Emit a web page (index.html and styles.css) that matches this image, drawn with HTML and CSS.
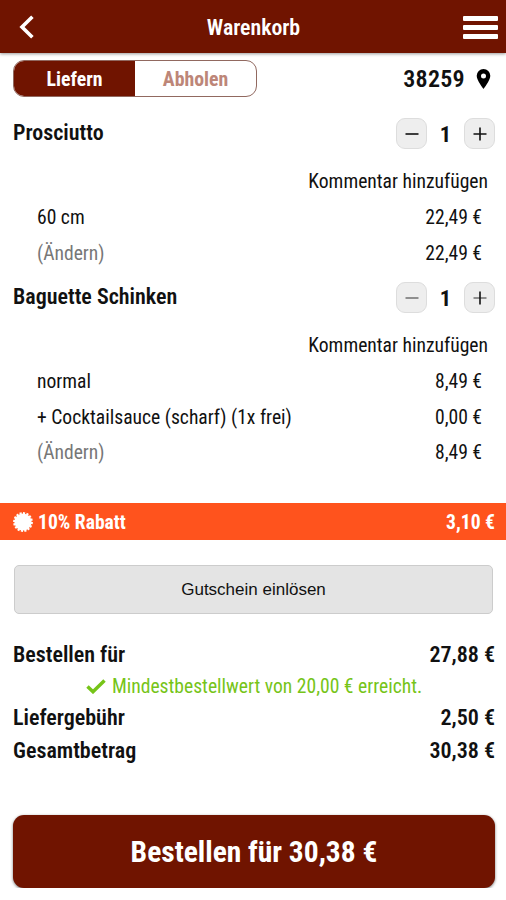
FILE: index.html
```html
<!DOCTYPE html>
<html lang="de">
<head>
<meta charset="utf-8">
<title>Warenkorb</title>
<link rel="stylesheet" href="styles.css">
</head>
<body>
<header class="topbar">
  <svg class="back" viewBox="0 0 16 24"><path d="M13.4 1.8 3 12l10.4 10.2"/></svg>
  <h1><span class="t title">Warenkorb</span></h1>
  <div class="menu"><i></i><i></i><i></i></div>
</header>
<main>
  <div class="mode">
    <div class="toggle">
      <div class="on"><span class="t">Liefern</span></div>
      <div class="off"><span class="t">Abholen</span></div>
    </div>
    <div class="zip"><span class="t">38259</span>
      <svg viewBox="0 0 14 20"><path fill-rule="evenodd" d="M7 0a6.8 6.8 0 0 0-6.8 6.8C.2 11.5 7 20 7 20s6.8-8.500 6.800-13.200A6.800 6.800 0 0 0 7 0Zm0 4.400a2.500 2.500 0 1 1 0 5 2.500 2.500 0 0 1 0-5Z"/></svg>
    </div>
  </div>
  <section class="item">
    <div class="head"><span class="t name">Prosciutto</span>
      <div class="qty"><button><svg viewBox="0 0 14 14"><path d="M.5 7h13"/></svg></button><b class="t">1</b><button><svg viewBox="0 0 14 14"><path d="M.5 7h13M7 .5v13"/></svg></button></div>
    </div>
    <div class="comment"><span class="t">Kommentar hinzufügen</span></div>
    <div class="line"><span class="t">60 cm</span><span class="t">22,49 €</span></div>
    <div class="line"><span class="t edit">(Ändern)</span><span class="t">22,49 €</span></div>
  </section>
  <section class="item">
    <div class="head"><span class="t name">Baguette Schinken</span>
      <div class="qty"><button class="dim"><svg viewBox="0 0 14 14"><path d="M.5 7h13"/></svg></button><b class="t">1</b><button><svg viewBox="0 0 14 14"><path class="faint" d="M.5 7h13"/><path d="M7 .5v13"/></svg></button></div>
    </div>
    <div class="comment"><span class="t">Kommentar hinzufügen</span></div>
    <div class="line"><span class="t">normal</span><span class="t">8,49 €</span></div>
    <div class="line"><span class="t">+ Cocktailsauce (scharf) (1x frei)</span><span class="t">0,00 €</span></div>
    <div class="line"><span class="t edit">(Ändern)</span><span class="t">8,49 €</span></div>
  </section>
  <div class="discount">
    <svg viewBox="0 0 20 20"><circle cx="10" cy="10" r="8.600"/><circle class="teeth" cx="10" cy="10" r="8.900" pathLength="64"/></svg>
    <span class="t">10% Rabatt</span><span class="t amount">3,10 €</span>
  </div>
  <button class="voucher">Gutschein einlösen</button>
  <section class="totals">
    <div class="sum"><span class="t">Bestellen für</span><span class="t">27,88 €</span></div>
    <div class="minimum"><svg viewBox="0 0 20 15"><path d="m1.500 7.500 5.500 5.200L18.500 1.500"/></svg><span class="t">Mindestbestellwert von 20,00 € erreicht.</span></div>
    <div class="sum"><span class="t">Liefergebühr</span><span class="t">2,50 €</span></div>
    <div class="sum"><span class="t">Gesamtbetrag</span><span class="t">30,38 €</span></div>
  </section>
  <button class="order"><span class="t">Bestellen für 30,38 €</span></button>
</main>
</body>
</html>
```
FILE: styles.css
```css
* { box-sizing: border-box; }
body { margin: 0; background: #fff; color: #111; font-family: "Roboto Condensed", Roboto, "Liberation Sans", sans-serif; font-stretch: 75%; font-size: 19.600px; line-height: 24px; }
button { font: inherit; color: inherit; padding: 0; }
.t { white-space: nowrap; }
.topbar { height: 53px; background: #701400; color: #fff; display: grid; grid-template-columns: 60px 1fr 60px; align-items: center; box-shadow: 0 1px 3px #4448; }
.topbar h1 { margin: 0; padding: 2px 0 0 1px; text-align: center; font-size: 21.800px; font-weight: 600; }
.back { width: 16px; height: 24px; margin: 1px 0 0 19px; fill: none; stroke: #fff; stroke-width: 3.600px; }
.menu { display: grid; gap: 4px; width: 35px; margin-left: 17px; padding-top: 2px; }
.menu i { height: 5px; background: #fff; border-radius: 1px; }
.mode { display: flex; justify-content: space-between; padding: 7px 15px 0 13px; height: 62px; }
.toggle { width: 244px; height: 37px; border: 1px solid #916960; border-radius: 11px; display: grid; grid-template-columns: 1fr 1fr; overflow: hidden; text-align: center; line-height: 37px; font-size: 19.800px; font-weight: 700; }
.on { background: #701400; color: #fff; }
.off { color: #bd8678; }
.zip { display: flex; align-items: center; height: 36px; gap: 11px; font-size: 24px; font-weight: 600; letter-spacing: .3px; padding-top: 1px; }
.zip svg { width: 15px; height: 20px; }
.item { height: 164px; }
.head { display: flex; justify-content: space-between; align-items: center; height: 36px; padding: 0 11px 0 13px; margin-bottom: 12px; }
.name { font-size: 22px; font-weight: 600; }
.qty { display: grid; grid-template-columns: 31px 37px 31px; align-items: center; text-align: center; font-size: 22.500px; padding-top: 1px; }
.qty button { height: 31px; border: 1px solid #ddd; border-radius: 9px; background: #eee; display: grid; place-items: center; }
.qty svg { width: 14px; height: 14px; stroke: #111; stroke-width: 1.600px; }
.qty .dim svg, .qty .faint { stroke: #777; }
.comment { height: 36px; line-height: 37px; text-align: right; padding-right: 18px; }
.line { display: flex; justify-content: space-between; height: 35.500px; line-height: 37px; padding: 0 24px 0 37px; }
.edit { color: #777; }
.discount { margin-top: 60px; height: 37px; background: #ff531d; color: #fff; display: flex; align-items: center; padding: 0 11px 0 13px; line-height: 37px; font-weight: 700; }
.discount svg { width: 20px; height: 20px; margin-right: 5px; fill: #fff; }
.discount .t { padding-top: 1px; }
.discount .teeth { fill: none; stroke: #fff; stroke-width: 2px; stroke-dasharray: 2.500 1.500; }
.amount { margin-left: auto; }
.voucher { display: block; width: 479px; height: 49px; margin: 25px 0 0 14px; border: 1px solid #ccc; border-radius: 5px; background: #e4e4e4; font: 17px "Liberation Sans", sans-serif; }
.totals { padding: 24px 11px 0 13px; height: 201px; }
.sum { display: flex; justify-content: space-between; height: 33px; line-height: 33px; font-size: 22px; font-weight: 600; }
.minimum { display: flex; align-items: center; justify-content: center; height: 30px; line-height: 26px; color: #76c418; gap: 6px; }
.minimum svg { width: 20px; height: 15px; fill: none; stroke: #76c418; stroke-width: 3.500px; }
.minimum .t { padding-top: 1px; }
.order { display: block; width: 482px; height: 73px; margin-left: 13px; border: 0; border-radius: 11px; background: #701400; color: #fff; box-shadow: 0 1px 3px #0008; font-size: 29.500px; font-weight: 700; }
```
